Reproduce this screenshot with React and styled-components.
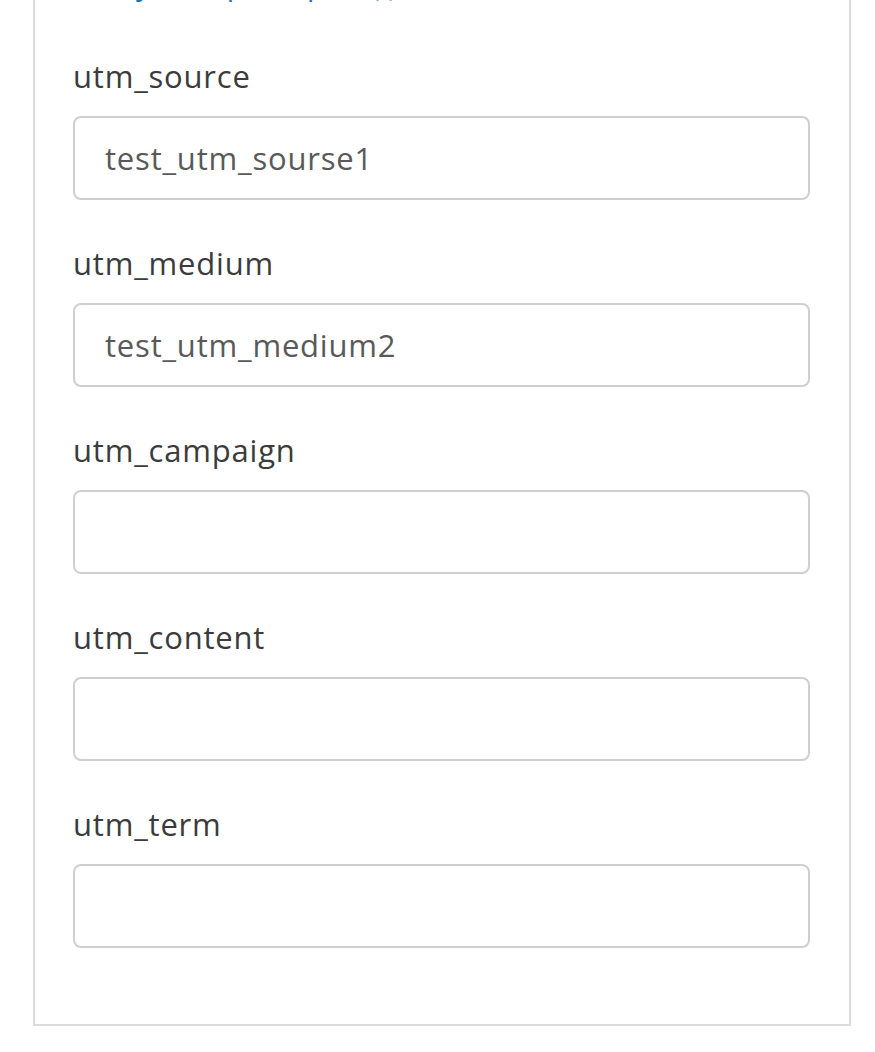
import React from "react";
import styled, { createGlobalStyle } from "styled-components";

const Global = createGlobalStyle`
  html, body { margin: 0; padding: 0; background: #ffffff; }
  body { font-family: "Open Sans", Lato, sans-serif; }
`;

const Page = styled.div`
  padding: 0 24px 0 33px;
  height: 1052px;
  overflow: hidden;
  box-sizing: border-box;
`;

const Card = styled.section`
  width: 818px;
  box-sizing: border-box;
  margin-top: -34px;
  border: 2px solid #dcdcdc;
  border-top: none;
  padding: 0 39px 76px 38px;
  display: flex;
  flex-direction: column;
`;

const HintLink = styled.a`
  display: block;
  font-size: 29px;
  line-height: 36px;
  letter-spacing: 0.5px;
  color: #1f73b7;
  padding-left: 54px;
  text-decoration: none;
  white-space: nowrap;
`;

const Fields = styled.div`
  display: flex;
  flex-direction: column;
  gap: 45px;
  margin-top: 56px;
`;

const Field = styled.label`
  display: flex;
  flex-direction: column;
  gap: 22px;
`;

const Label = styled.span`
  font-size: 31px;
  line-height: 36px;
  letter-spacing: 0.8px;
  color: #3b3b3b;
`;

const Input = styled.input`
  box-sizing: border-box;
  width: 100%;
  height: 84px;
  border: 2px solid #cfcfcf;
  border-radius: 8px;
  padding: 0 20px 0 30px;
  font-family: "Open Sans", Lato, sans-serif;
  font-size: 31px;
  letter-spacing: 0.8px;
  color: #595959;
  background: #fff;
  outline: none;
`;

const fields = [
  { name: "utm_source", value: "test_utm_sourse1" },
  { name: "utm_medium", value: "test_utm_medium2" },
  { name: "utm_campaign", value: "" },
  { name: "utm_content", value: "" },
  { name: "utm_term", value: "" },
];

export default function App() {
  return (
    <Page>
      <Global />
      <Card>
        <HintLink href="#">(учет при переходе)</HintLink>
        <Fields>
          {fields.map((f) => (
            <Field key={f.name}>
              <Label>{f.name}</Label>
              <Input name={f.name} defaultValue={f.value} readOnly />
            </Field>
          ))}
        </Fields>
      </Card>
    </Page>
  );
}
